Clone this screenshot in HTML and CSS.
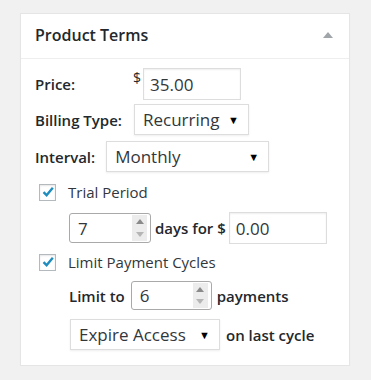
FILE: index.html
```html
<!DOCTYPE html>
<html lang="en">
<head>
    <meta charset="UTF-8">
    <meta name="viewport" content="width=device-width, initial-scale=1.0">
    <title>Product Terms</title>
    <link rel="stylesheet" href="styles.css">
</head>
<body>
    <div class="postbox">
        <div class="postbox-header">
            <h2>Product Terms</h2>
            <span class="toggle"></span>
        </div>

        <div class="inside">
            <div class="row row-price">
                <label class="price-label">Price:</label>
                <span class="currency">$</span>
                <input class="text-input price-input" type="text" value="35.00">
            </div>

            <div class="row row-billing">
                <label>Billing Type:</label>
                <div class="select billing-select">
                    <span>Recurring</span>
                    <span class="arrow">&#9660;</span>
                </div>
            </div>

            <div class="row row-interval">
                <label>Interval:</label>
                <div class="select interval-select">
                    <span>Monthly</span>
                    <span class="arrow">&#9660;</span>
                </div>
            </div>

            <div class="row check-row">
                <span class="checkbox checked">
                    <svg width="14" height="14" viewBox="0 0 14 14"><path d="M2.5 7.2 L5.6 10.2 L11.8 2.8" fill="none" stroke="#1e8cbe" stroke-width="2.4"/></svg>
                </span>
                <span class="check-label">Trial Period</span>
            </div>

            <div class="row sub-row trial-row">
                <div class="spin-box trial-days">
                    <input type="text" value="7">
                    <span class="spinner">
                        <span class="spin-up"></span>
                        <span class="spin-down"></span>
                    </span>
                </div>
                <label>days for $</label>
                <input class="text-input trial-price" type="text" value="0.00">
            </div>

            <div class="row check-row check-row-2">
                <span class="checkbox checked">
                    <svg width="14" height="14" viewBox="0 0 14 14"><path d="M2.5 7.2 L5.6 10.2 L11.8 2.8" fill="none" stroke="#1e8cbe" stroke-width="2.4"/></svg>
                </span>
                <span class="check-label">Limit Payment Cycles</span>
            </div>

            <div class="row sub-row limit-row">
                <label>Limit to</label>
                <div class="spin-box limit-count">
                    <input type="text" value="6">
                    <span class="spinner">
                        <span class="spin-up"></span>
                        <span class="spin-down"></span>
                    </span>
                </div>
                <label>payments</label>
            </div>

            <div class="row sub-row expire-row">
                <div class="select expire-select">
                    <span>Expire Access</span>
                    <span class="arrow">&#9660;</span>
                </div>
                <label>on last cycle</label>
            </div>
        </div>
    </div>
</body>
</html>
```

FILE: styles.css
```css
html, body {
    margin: 0;
    padding: 0;
}

body {
    background: #f1f1f1;
    font-family: "Open Sans", sans-serif;
    font-size: 15px;
    color: #23282d;
}

.postbox {
    margin: 13px 21px 0 20px;
    background: #fff;
    border: 1px solid #e5e5e5;
    box-shadow: 0 1px 1px rgba(0, 0, 0, 0.04);
}

.postbox-header {
    display: flex;
    align-items: center;
    justify-content: space-between;
    height: 44px;
    padding: 0 16px 0 14px;
    border-bottom: 1px solid #eee;
}

.postbox-header h2 {
    margin: 0 0 2px;
    font-size: 16px;
    font-weight: 600;
    color: #23282d;
}

/* collapse arrow */
.toggle {
    width: 0;
    height: 0;
    margin-bottom: 2px;
    border-left: 5px solid transparent;
    border-right: 5px solid transparent;
    border-bottom: 6px solid #a0a5aa;
}

.inside {
    padding: 9px 14px 15px;
}

.row {
    display: flex;
    align-items: center;
}

label {
    font-weight: 600;
}

/* inputs */
.text-input {
    box-sizing: border-box;
    height: 32px;
    border: 1px solid #ddd;
    box-shadow: inset 0 1px 2px rgba(0, 0, 0, 0.07);
    font-family: inherit;
    font-size: 17px;
    color: #32373c;
    padding: 0 6px;
    outline: none;
}

.row-price .price-label {
    width: 98px;
}

.currency {
    align-self: flex-start;
    margin: 0 2px 0 0;
    font-size: 14px;
}

.price-input {
    width: 98px;
}

.select {
    box-sizing: border-box;
    display: flex;
    align-items: center;
    justify-content: space-between;
    height: 31px;
    border: 1px solid #ddd;
    box-shadow: 0 1px 2px rgba(0, 0, 0, 0.07);
    padding: 0 9px 0 8px;
    font-size: 17px;
    color: #32373c;
    font-weight: 400;
}

.select .arrow {
    font-size: 11px;
    color: #000;
}

.row-billing {
    margin-top: 4px;
}

.row-billing label {
    margin-right: 12px;
}

.billing-select {
    width: 115px;
}

.row-interval {
    margin-top: 6px;
}

.row-interval label {
    margin-right: 11px;
}

.interval-select {
    width: 163px;
}

/* checkboxes */
.check-row {
    margin-top: 10px;
    padding-left: 4px;
}

.checkbox {
    box-sizing: border-box;
    display: flex;
    align-items: center;
    justify-content: center;
    width: 17px;
    height: 17px;
    border: 1px solid #b4b9be;
    box-shadow: inset 0 1px 2px rgba(0, 0, 0, 0.1);
    background: #fff;
}

.check-label {
    margin-left: 12px;
    font-size: 15px;
    color: #32373c;
}

.check-row-2 {
    margin-top: 8px;
}

.sub-row {
    padding-left: 34px;
}

.trial-row {
    margin-top: 10px;
}

.trial-row label {
    margin: 0 3px 0 4px;
}

.trial-price {
    width: 98px;
}

/* number box with spinner */
.spin-box {
    box-sizing: border-box;
    display: flex;
    height: 30px;
    border: 1px solid #a9a9a9;
    border-radius: 3px;
    background: #fff;
}

.spin-box input {
    flex: 1;
    min-width: 0;
    border: none;
    outline: none;
    font-family: inherit;
    font-size: 17px;
    color: #32373c;
    padding: 0 0 0 8px;
    background: transparent;
}

.spinner {
    display: flex;
    flex-direction: column;
    width: 15px;
    margin: 1px 3px 1px 0;
    background: #ececec;
}

.spin-up,
.spin-down {
    flex: 1;
    display: flex;
    align-items: center;
    justify-content: center;
}

.spin-up::before {
    content: '';
    border-left: 4px solid transparent;
    border-right: 4px solid transparent;
    border-bottom: 5px solid #8a8a8a;
}

.spin-down::before {
    content: '';
    border-left: 4px solid transparent;
    border-right: 4px solid transparent;
    border-top: 5px solid #b5b5b5;
}

.trial-days {
    width: 82px;
}

.limit-row {
    margin-top: 9px;
}

.limit-row label:first-child {
    margin-right: 6px;
}

.limit-count {
    width: 81px;
    height: 29px;
}

.limit-row .limit-count + label {
    margin-left: 5px;
}

.expire-row {
    margin-top: 9px;
    padding-left: 35px;
}

.expire-select {
    width: 150px;
}

.expire-row label {
    margin-left: 6px;
}
```
